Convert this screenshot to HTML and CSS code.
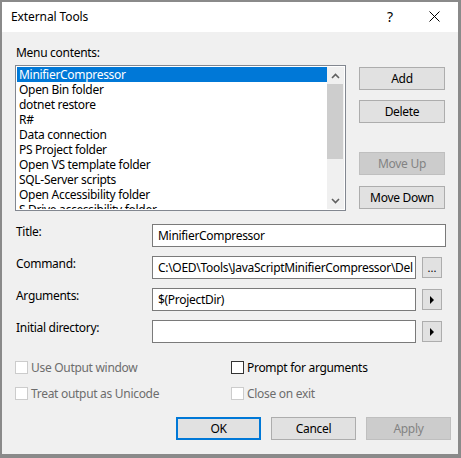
FILE: index.html
```html
<!DOCTYPE html>
<html>
<head>
<meta charset="utf-8">
<title>External Tools</title>
<link rel="stylesheet" href="styles.css">
</head>
<body>
<div class="window">
  <div class="titlebar">
    <span class="title">External Tools</span>
    <span class="help">?</span>
    <span class="close"><svg width="11" height="11" viewBox="0 0 11 11"><path d="M0.5 0.5L10.5 10.5M10.5 0.5L0.5 10.5" stroke="#000" stroke-width="1" fill="none"/></svg></span>
  </div>
  <div class="content">
    <div class="menu-label">Menu contents:</div>
    <div class="top">
      <div class="listbox">
        <ul class="items">
          <li class="sel">MinifierCompressor</li>
          <li>Open Bin folder</li>
          <li>dotnet restore</li>
          <li>R#</li>
          <li>Data connection</li>
          <li>PS Project folder</li>
          <li>Open VS template folder</li>
          <li>SQL-Server scripts</li>
          <li>Open Accessibility folder</li>
          <li>S Drive accessibility folder</li>
        </ul>
        <div class="scrollbar">
          <div class="arrow"><svg width="9" height="6" viewBox="0 0 9 6"><path d="M1 5L4.5 1.5L8 5" stroke="#606060" stroke-width="1.6" fill="none"/></svg></div>
          <div class="track"><div class="thumb"></div></div>
          <div class="arrow"><svg width="9" height="6" viewBox="0 0 9 6"><path d="M1 1L4.5 4.5L8 1" stroke="#606060" stroke-width="1.6" fill="none"/></svg></div>
        </div>
      </div>
      <div class="side">
        <div class="btn">Add</div>
        <div class="btn delete">Delete</div>
        <div class="btn disabled moveup">Move Up</div>
        <div class="btn movedown">Move Down</div>
      </div>
    </div>
    <div class="form">
      <div class="label">Title:</div>
      <div class="input wide">MinifierCompressor</div>
      <div class="label">Command:</div>
      <div class="input">C:\OED\Tools\JavaScriptMinifierCompressor\Del</div>
      <div class="mini dots">...</div>
      <div class="label">Arguments:</div>
      <div class="input">$(ProjectDir)</div>
      <div class="mini"><svg width="5" height="8" viewBox="0 0 5 8"><path d="M0 0L4 4L0 8Z" fill="#000"/></svg></div>
      <div class="label">Initial directory:</div>
      <div class="input"></div>
      <div class="mini"><svg width="5" height="8" viewBox="0 0 5 8"><path d="M0 0L4 4L0 8Z" fill="#000"/></svg></div>
    </div>
    <div class="checks">
      <div class="check disabled"><span class="box"></span><span>Use Output window</span></div>
      <div class="check"><span class="box"></span><span>Prompt for arguments</span></div>
      <div class="check disabled"><span class="box"></span><span>Treat output as Unicode</span></div>
      <div class="check disabled"><span class="box"></span><span>Close on exit</span></div>
    </div>
    <div class="footer">
      <div class="btn fbtn default">OK</div>
      <div class="btn fbtn">Cancel</div>
      <div class="btn fbtn disabled">Apply</div>
    </div>
  </div>
</div>
</body>
</html>
```

FILE: styles.css
```css
* { box-sizing: border-box; }
html, body { margin: 0; padding: 0; }
body {
  font-family: "Noto Sans", sans-serif;
  font-size: 12px;
  letter-spacing: -0.3px;
  color: #000;
  width: 461px;
  height: 458px;
  overflow: hidden;
  background: #fff;
}
.window {
  width: 461px;
  height: 458px;
  border-style: solid;
  border-color: #8a8a8a;
  border-width: 2px 3px 4px 2px;
  display: flex;
  flex-direction: column;
}
.titlebar {
  height: 30px;
  background: #fff;
  display: flex;
  align-items: center;
  padding-left: 9px;
  flex-shrink: 0;
}
.title { line-height: 16px; letter-spacing: -0.1px; }
.help {
  margin-left: auto;
  font-size: 14px;
  width: 8px;
  margin-right: 34px;
  line-height: 16px;
  margin-top: -1px;
}
.close {
  width: 11px;
  height: 11px;
  margin-right: 18px;
  display: flex;
  margin-top: -1px;
}
.content {
  flex: 1;
  background: #f0f0f0;
  padding: 13px 13px 0 13px;
}
.menu-label {
  line-height: 16px;
  padding-left: 1px;
  margin-bottom: 4px;
}
.top { display: flex; gap: 13px; }
.listbox {
  width: 331px;
  height: 146px;
  border: 1px solid #828790;
  background: #fff;
  padding: 1px;
  display: flex;
}
.items {
  flex: 1;
  margin: 0;
  padding: 0;
  list-style: none;
  overflow: hidden;
}
.items li {
  line-height: 15px;
  height: 15px;
  padding-left: 2px;
  white-space: nowrap;
}
.items li.sel { background: #0078d7; color: #fff; }
.scrollbar {
  width: 17px;
  background: #f0f0f0;
  display: flex;
  flex-direction: column;
}
.arrow {
  height: 17px;
  display: flex;
  align-items: center;
  justify-content: center;
}
.track { flex: 1; }
.thumb {
  height: 75px;
  margin-right: 1px;
  background: #cdcdcd;
}
.side {
  display: flex;
  flex-direction: column;
  padding-top: 2px;
}
.btn {
  width: 86px;
  height: 23px;
  background: #e1e1e1;
  border: 1px solid #adadad;
  display: flex;
  align-items: center;
  justify-content: center;
}
.btn.disabled {
  background: #cccccc;
  border-color: #bfbfbf;
  color: #838383;
}
.delete { margin-top: 10px; }
.moveup { margin-top: 29px; }
.movedown { margin-top: 11px; }
.form {
  display: grid;
  grid-template-columns: 137px 264px 30px;
  row-gap: 9px;
  margin-top: 13px;
  align-items: center;
}
.label {
  padding-left: 1px;
  line-height: 16px;
  align-self: start;
}
.input {
  height: 23px;
  border: 1px solid #7a7a7a;
  background: #fff;
  padding-left: 5px;
  line-height: 21px;
  white-space: nowrap;
  overflow: hidden;
}
.input.wide { grid-column: 2 / 4; }
.mini {
  width: 20px;
  height: 21px;
  margin-left: 6px;
  background: #e1e1e1;
  border: 1px solid #adadad;
  display: flex;
  align-items: center;
  justify-content: center;
}
.mini.dots {
  align-items: flex-end;
  line-height: 14px;
  padding-bottom: 2px;
  letter-spacing: 0;
  font-size: 11px;
}
.checks {
  display: grid;
  grid-template-columns: 216px auto;
  row-gap: 9px;
  margin-top: 16px;
}
.check {
  height: 17px;
  display: flex;
  align-items: center;
}
.box {
  width: 13px;
  height: 13px;
  border: 1px solid #333;
  background: #fff;
  margin-right: 3px;
  flex-shrink: 0;
}
.check.disabled { color: #6d6d6d; }
.check.disabled .box { border-color: #cccccc; }
.footer {
  display: flex;
  justify-content: flex-end;
  gap: 10px;
  margin-top: 15px;
  margin-right: -6px;
}
.fbtn { width: 85px; }
.fbtn.default { border: 2px solid #0078d7; }
```
